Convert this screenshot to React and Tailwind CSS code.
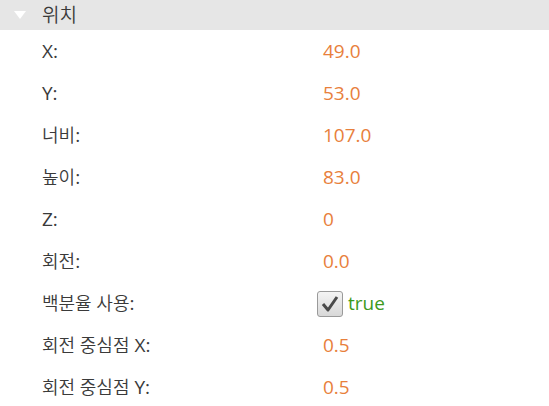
const hangul = /([\uAC00-\uD7A3]+(?: [\uAC00-\uD7A3]+)*)/;

function Label({ text, className }) {
  return (
    <span className={className}>
      {text.split(hangul).map((part, i) =>
        hangul.test(part) ? (
          <span key={i} className="text-[18px] font-[350]">{part}</span>
        ) : (
          <span key={i}>{part}</span>
        )
      )}
    </span>
  );
}

export default function App() {
  const rows = [
    { label: "X:", value: "49.0" },
    { label: "Y:", value: "53.0" },
    { label: "너비:", value: "107.0" },
    { label: "높이:", value: "83.0" },
    { label: "Z:", value: "0" },
    { label: "회전:", value: "0.0" },
    { label: "백분율 사용:", check: true },
    { label: "회전 중심점 X:", value: "0.5" },
    { label: "회전 중심점 Y:", value: "0.5" },
  ];

  return (
    <div
      className="w-[549px] h-[406px] bg-white overflow-hidden"
      style={{ fontFamily: '"Open Sans", "Noto Sans CJK KR", sans-serif' }}
    >
      <div className="h-[30px] bg-[#e6e6e6] flex items-center">
        <svg width="12" height="8" viewBox="0 0 12 8" className="ml-[14px]">
          <polygon points="0,0 12,0 6,8" fill="#ffffff" />
        </svg>
        <span className="ml-[16px] text-[19px] font-[350] text-[#3a3a3a]">위치</span>
      </div>
      <div className="flex flex-col">
        {rows.map((r) => (
          <div key={r.label} className="h-[42px] flex items-center text-[19px] pt-[1px]">
            <Label text={r.label} className="w-[323px] pl-[42px] text-[#3a3a3a]" />
            {r.check ? (
              <div className="flex items-center -ml-[6px]">
                <div className="w-[26px] h-[26px] rounded-[3px] border border-[#9a9a9a] bg-gradient-to-b from-[#f4f4f4] to-[#d8d8d8] flex items-center justify-center">
                  <svg width="18" height="16" viewBox="0 0 18 16">
                    <path d="M2 8 L7 14 L16 1" fill="none" stroke="#4a4a4a" strokeWidth="3" strokeLinejoin="round" />
                  </svg>
                </div>
                <span className="ml-[5px] text-[#3c9a1c]">true</span>
              </div>
            ) : (
              <span className="text-[#e8803c]">{r.value}</span>
            )}
          </div>
        ))}
      </div>
    </div>
  );
}
